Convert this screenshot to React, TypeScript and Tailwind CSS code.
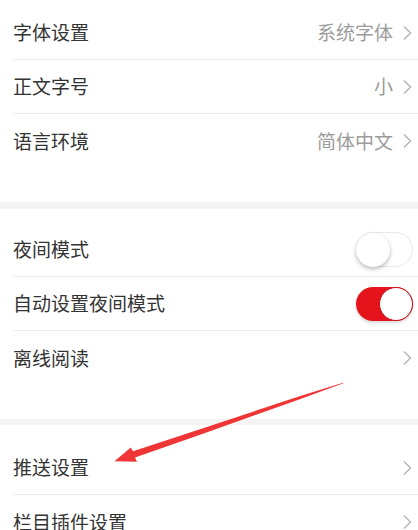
import type { ReactNode } from 'react'

const font = { fontFamily: '"Noto Sans CJK SC", "Noto Sans", sans-serif' }

function Chevron() {
  return (
    <svg width="10" height="16" viewBox="0 0 10 16" className="ml-[9px] shrink-0">
      <polyline points="2,1.5 8.5,8 2,14.5" fill="none" stroke="#b3b3b3" strokeWidth="1.4" />
    </svg>
  )
}

function Toggle({ on }: { on: boolean }) {
  return on ? (
    <div className="flex h-[34px] w-[57px] items-center justify-end rounded-full bg-[#e5141c] shadow-[0_2px_3px_rgba(0,0,0,0.15)]">
      <div className="h-[34px] w-[34px] rounded-full border-[1.5px] border-[#c91018] bg-white" />
    </div>
  ) : (
    <div className="flex h-[35px] w-[57px] items-center rounded-full border border-[#e8e8e8] bg-white">
      <div className="-ml-px h-[34px] w-[34px] rounded-full bg-white shadow-[0_2px_4px_rgba(0,0,0,0.28)]" />
    </div>
  )
}

function Row({ label, value, right, divider = true }: { label: string; value?: string; right?: ReactNode; divider?: boolean }) {
  return (
    <div className="pl-[13px]">
      <div className={`flex h-[54px] items-center ${right ? 'pr-[5px]' : 'pr-[6px]'} ${divider ? 'border-b border-[#ededed]' : ''}`}>
        <span className="flex-1 text-[19px] text-[#333333]">{label}</span>
        {value && <span className="text-[19px] text-[#9c9c9c]">{value}</span>}
        {right ?? <Chevron />}
      </div>
    </div>
  )
}

export default function App() {
  return (
    <div className="relative h-[530px] w-[418px] overflow-hidden bg-[#f4f4f4]" style={font}>
      <div className="bg-white pt-[6px] pb-[34px]">
        <Row label="字体设置" value="系统字体" />
        <Row label="正文字号" value="小" />
        <Row label="语言环境" value="简体中文" divider={false} />
      </div>
      <div className="mt-[7px] bg-white pt-[14px] pb-[34px]">
        <Row label="夜间模式" right={<Toggle on={false} />} />
        <Row label="自动设置夜间模式" right={<Toggle on />} />
        <Row label="离线阅读" divider={false} />
      </div>
      <div className="mt-[6px] bg-white pt-[16px]">
        <Row label="推送设置" />
        <Row label="栏目插件设置" divider={false} />
      </div>
      {/* annotation arrow drawn over the list */}
      <svg className="pointer-events-none absolute left-0 top-0" width="418" height="530" viewBox="0 0 418 530">
        <polygon
          points="343,382.7 299.5,396.3 199.2,429.4 133,451.3 130.8,447.4 114.5,461.2 137,461.8 135,457.6 200.8,434.4 300.5,399.1 343.3,383.3"
          fill="#ef3535"
        />
      </svg>
    </div>
  )
}
